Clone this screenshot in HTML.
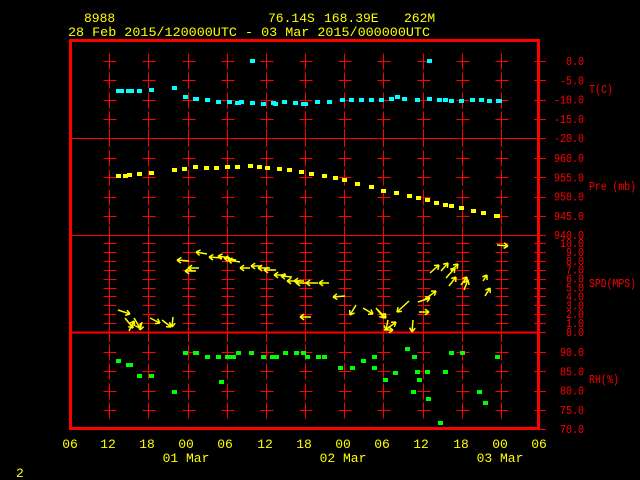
<!DOCTYPE html>
<html><head><meta charset="utf-8"><style>
html,body{margin:0;padding:0;background:#000;width:640px;height:480px;overflow:hidden}
svg{display:block}
text{font-family:"Liberation Mono","DejaVu Sans Mono",monospace;font-size:13px}
#lab text,.u{font-size:12px}
</style></head><body>
<svg id="s" width="640" height="480" xmlns="http://www.w3.org/2000/svg">
<rect width="640" height="480" fill="#000"/>
<g fill="#ffff00">
<text x="84" y="22">8988</text>
<text x="268" y="22">76.14S</text>
<text x="324" y="22">168.39E</text>
<text x="404" y="22">262M</text>
<text x="68" y="36" textLength="362" lengthAdjust="spacingAndGlyphs">28 Feb 2015/120000UTC - 03 Mar 2015/000000UTC</text>
<g text-anchor="middle">
<text x="70" y="448">06</text><text x="108" y="448">12</text><text x="147" y="448">18</text>
<text x="186" y="448">00</text><text x="225" y="448">06</text><text x="265" y="448">12</text>
<text x="304" y="448">18</text><text x="343" y="448">00</text><text x="382" y="448">06</text>
<text x="421" y="448">12</text><text x="461" y="448">18</text><text x="500" y="448">00</text>
<text x="539" y="448">06</text>
<text x="186" y="462">01 Mar</text><text x="343" y="462">02 Mar</text><text x="500" y="462">03 Mar</text>
</g>
<text x="16" y="477">2</text>
</g>
<g fill="#ff0000" text-anchor="end" id="lab"></g>
<g fill="#ff0000">
<text class="u" x="589" y="93" textLength="24" lengthAdjust="spacingAndGlyphs">T(C)</text>
<text class="u" x="589" y="190" textLength="47" lengthAdjust="spacingAndGlyphs">Pre (mb)</text>
<text class="u" x="589" y="287" textLength="47" lengthAdjust="spacingAndGlyphs">SPD(MPS)</text>
<text class="u" x="589" y="383" textLength="30" lengthAdjust="spacingAndGlyphs">RH(%)</text>
</g>
<g id="g"></g>
</svg>
<script>
var NS="http://www.w3.org/2000/svg",g=document.getElementById('g'),lab=document.getElementById('lab');
function el(t,a,p){var e=document.createElementNS(NS,t);for(var k in a)e.setAttribute(k,a[k]);(p||g).appendChild(e);return e;}
function ln(x1,y1,x2,y2,c,w){el('line',{x1:x1,y1:y1,x2:x2,y2:y2,stroke:c,'stroke-width':w||1});}
var R='#ff0000',cols=[];for(var i=1;i<=11;i++)cols.push(Math.round(70+i*39.17)+0.5);
function L(t,y){var e=el('text',{x:584,y:y+4,textLength:t.length*6,lengthAdjust:'spacingAndGlyphs'},lab);e.textContent=t;}
var T=['0.0','-5.0','-10.0','-15.0','-20.0'];for(i=0;i<5;i++){var y=61+i*19.3;L(T[i],y);ln(534,Math.round(y)+.5,546,Math.round(y)+.5,R);}
var P=['960.0','955.0','950.0','945.0'];for(i=0;i<4;i++){y=158+i*19.3;L(P[i],y);ln(534,Math.round(y)+.5,546,Math.round(y)+.5,R);}
for(i=0;i<=10;i++){y=243+(10-i)*8.9;L(i+'.0',y);ln(534,Math.round(y)+.5,546,Math.round(y)+.5,R);}
L('940.0',235);
var H=['90.0','85.0','80.0','75.0','70.0'];for(i=0;i<5;i++){y=352+i*19.3;L(H[i],y);ln(534,Math.round(y)+.5,546,Math.round(y)+.5,R);}
function crosses(lv){cols.forEach(function(x){lv.forEach(function(y){y=Math.round(y)+.5;ln(x,y-8,x,y+8,R);ln(x-6,y,x+7,y,R);});});}
crosses([61,80.3,99.6,118.9]);crosses([158,177.3,196.6,215.9]);crosses([352,371.3,390.6,409.9]);
cols.forEach(function(x){ln(x,235,x,342,R);for(var k=0;k<10;k++){var y=Math.round(243+k*8.9)+.5;ln(x-6,y,x+7,y,R);}
 ln(x,129,x,147,R);ln(x,226,x,235,R);});
ln(72,138.5,540,138.5,R);ln(72,235.5,546,235.5,R);ln(72,332.5,540,332.5,R,2);
el('rect',{x:70.5,y:40.5,width:468,height:388,fill:'none',stroke:R,'stroke-width':3});
function sq(arr,c){arr.forEach(function(p){el('rect',{x:p[0]-3,y:p[1]-2,width:p[2]||5,height:4,fill:c});});}
sq([[119,91,8],[129,91,8],[140,91],[152,90],[175,88],[186,97],[196,99,6],[208,100],[219,102],[230,102],[238,103,6],[242,102],[253,103],[264,104],[274,103],[276,104],[285,102],[296,103],[304,104,7],[318,102],[330,102],[343,100],[352,100],[362,100],[372,100],[382,100],[392,99],[398,97],[405,99],[418,100],[430,99],[440,100],[446,100],[452,101],[462,101],[473,100],[482,100],[490,101],[499,101,6],[253,61],[430,61]],'#00ffff');
sq([[119,176],[126,176],[130,175],[140,174],[152,173],[175,170],[185,169],[196,167],[207,168],[217,168],[228,167],[238,167],[251,166],[260,167],[268,168],[280,169],[290,170],[302,172],[312,174],[325,176],[336,178],[345,180],[358,184],[372,187],[384,191],[397,193],[410,196],[419,198],[428,200],[437,203],[446,205],[452,206],[462,208],[474,211],[484,213],[497,216,6]],'#ffff00');
sq([[119,361],[129,365,7],[140,376],[152,376],[175,392],[186,353],[196,353,6],[208,357],[219,357],[228,357,6],[233,357,6],[239,353],[252,353],[264,357],[273,357],[276,357,6],[286,353],[297,353],[304,353],[308,357],[319,357],[353,368],[341,368],[375,357],[364,361],[375,368],[386,380],[396,373],[408,349],[415,357],[418,372],[420,380],[428,372],[414,392],[429,399],[452,353],[446,372],[463,353],[480,392],[486,403],[498,357],[441,423],[222,382],[325,357]],'#00ff00');
var Y='#ffff00';
function ar(x1,y1,x2,y2){ln(x1,y1,x2,y2,Y,1.5);var a=Math.atan2(y2-y1,x2-x1),h=5;
 [0.6,-0.6].forEach(function(d){ln(x2,y2,x2-h*Math.cos(a+d),y2-h*Math.sin(a+d),Y,1.5);});}
[[189,261,177,260],[207,254,196,252],[196,271,185,271],[199,268,188,268],[222,258,209,257],[230,258,218,256],[236,260,224,258],[240,262,228,260],[250,268,240,268],[262,266,251,266],[270,268,258,268],[276,270,264,270],[286,275,274,275],[292,277,281,276],[298,281,287,281],[304,281,294,281],[308,283,296,283],[318,283,306,283],[329,283,319,283],[311,317,300,317],[345,296,333,297],[118,310,130,314],[125,318,133,328],[134,318,140,328],[129,331,134,321],[150,318,160,323],[162,320,171,327],[173,317,172,327],[142,322,140,330],[356,305,350,315],[363,308,373,314],[376,308,384,318],[388,320,386,330],[378,310,386,318],[409,301,397,312],[413,320,412,332],[419,312,429,312],[418,302,430,298],[424,300,436,291],[430,273,439,265],[441,271,448,263],[446,278,455,268],[449,286,456,277],[451,271,458,264],[461,285,467,277],[464,290,468,280],[485,296,490,288],[483,281,487,275],[497,245,508,246],[388,328,396,322],[384,330,393,330]].forEach(function(a){ar(a[0],a[1],a[2],a[3]);});
</script>
</body></html>
